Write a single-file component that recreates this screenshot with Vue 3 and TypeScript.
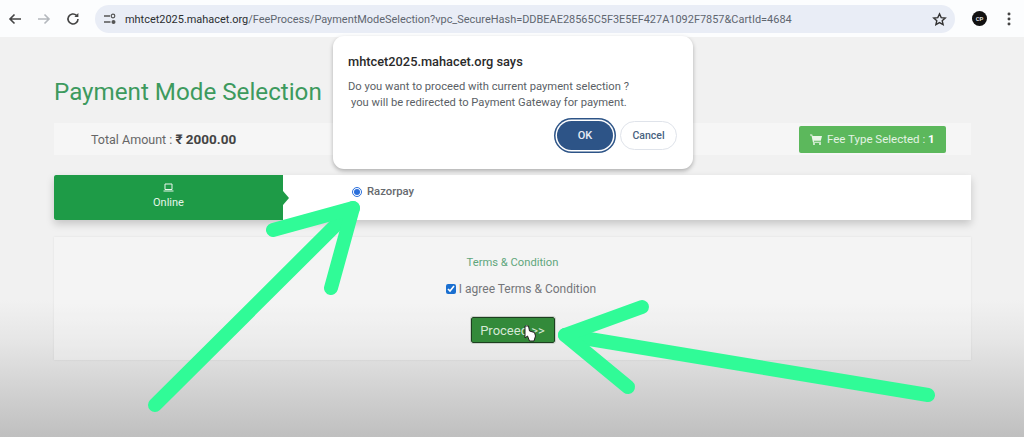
<script setup lang="ts">
const url = 'mhtcet2025.mahacet.org'
const urlPath = '/FeeProcess/PaymentModeSelection?vpc_SecureHash=DDBEAE28565C5F3E5EF427A1092F7857&CartId=4684'
</script>

<template>
  <div class="screen">
    <header class="browser-bar">
      <div class="nav-icons">
        <svg width="16" height="16" viewBox="0 0 16 16" class="nav-back">
          <path d="M14 8H3M7.5 3.5 3 8l4.5 4.5" fill="none" stroke="#444" stroke-width="1.6" />
        </svg>
        <svg width="16" height="16" viewBox="0 0 16 16" class="nav-forward">
          <path d="M2 8h11M8.5 3.5 13 8l-4.5 4.5" fill="none" stroke="#b4b8bd" stroke-width="1.6" />
        </svg>
        <svg width="16" height="16" viewBox="0 0 16 16" class="nav-reload">
          <path d="M13 8a5 5 0 1 1-1.5-3.6" fill="none" stroke="#444" stroke-width="1.6" />
          <path d="M13.4 2v4h-4z" fill="#444" />
        </svg>
      </div>
      <div class="url-pill">
        <svg width="14" height="12" viewBox="0 0 14 12" class="site-icon">
          <path d="M1 3h6M1 9h6.500" fill="none" stroke="#555" stroke-width="1.300" />
          <circle cx="10" cy="3" r="1.800" fill="none" stroke="#555" stroke-width="1.200" />
          <circle cx="10.500" cy="9" r="2" fill="#555" />
        </svg>
        <span class="url-text"><span class="url-host">{{ url }}</span>{{ urlPath }}</span>
        <svg width="15" height="15" viewBox="0 0 24 24" class="star">
          <path d="m12 3 2.700 6 6.500.6-4.900 4.300 1.500 6.400L12 17l-5.800 3.300 1.500-6.400-4.900-4.300 6.500-.6z" fill="none" stroke="#333" stroke-width="2.200" />
        </svg>
      </div>
      <div class="avatar">CP</div>
      <svg width="4" height="14" viewBox="0 0 4 14" class="kebab">
        <circle cx="2" cy="2" r="1.500" fill="#444" />
        <circle cx="2" cy="7" r="1.500" fill="#444" />
        <circle cx="2" cy="12" r="1.500" fill="#444" />
      </svg>
    </header>

    <main class="page">
      <h1 class="title">Payment Mode Selection</h1>

      <section class="amount-row">
        <div class="amount">Total Amount : <b>₹ 2000.00</b></div>
        <div class="fee-badge">
          <svg width="12" height="11" viewBox="0 0 12 11">
            <path d="M0 .5h2.200l.4 1.500H12l-1.200 4.700H3.800L4 7.800h7v1H3L1.500 1.500H0z" fill="#eaf6e8" />
            <circle cx="4" cy="10" r="1" fill="#eaf6e8" />
            <circle cx="10" cy="10" r="1" fill="#eaf6e8" />
          </svg>
          <span>Fee Type Selected : <b>1</b></span>
        </div>
      </section>

      <section class="mode-tabs">
        <div class="tab-active">
          <svg width="11" height="9" viewBox="0 0 11 9">
            <path d="M2 1h7v5.500H2zM.5 8h10" fill="none" stroke="#eaf6ee" stroke-width="1" />
          </svg>
          <span>Online</span>
        </div>
        <div class="tab-body">
          <label class="radio-label">
            <input type="radio" checked />
            <span>Razorpay</span>
          </label>
        </div>
      </section>

      <section class="terms">
        <div class="terms-title">Terms &amp; Condition</div>
        <label class="agree">
          <input type="checkbox" checked />
          <span>I agree Terms &amp; Condition</span>
        </label>
        <button class="proceed" type="button">Proceed &gt;&gt;</button>
      </section>
    </main>

    <div class="dialog">
      <div class="dialog-title">{{ url }} says</div>
      <p class="dialog-text">Do you want to proceed with current payment selection ?</p>
      <p class="dialog-text second">you will be redirected to Payment Gateway for payment.</p>
      <div class="dialog-actions">
        <button class="btn-ok" type="button">OK</button>
        <button class="btn-cancel" type="button">Cancel</button>
      </div>
    </div>

    <!-- annotation arrows + mouse pointer drawn over the screenshot -->
    <svg class="overlay" width="1024" height="437" viewBox="0 0 1024 437">
      <g fill="none" stroke="#30fb97" stroke-width="14" stroke-linecap="round" stroke-linejoin="round">
        <path d="M155 405 353 208" />
        <path d="M273 230 353 208 331 288" />
        <path d="M928 395 565 335" />
        <path d="M642 307 565 335 628 387" />
      </g>
      <path d="M525 326v12l2.500-2 2 5h4.500l1.500-5-1-3.500-5-1.500-1-5z" fill="#fff" stroke="#222" stroke-width="1" />
    </svg>
  </div>
</template>

<style scoped>
.screen {
  position: relative;
  width: 1024px;
  height: 437px;
  overflow: hidden;
  background: linear-gradient(to bottom, #f1f1f1 0, #f1f1f1 300px, #e6e6e6 340px, #d6d6d6 380px, #bfbfbf 437px);
  font-family: Roboto, "Liberation Sans", sans-serif;
}

.browser-bar {
  display: flex;
  align-items: center;
  height: 37px;
  padding: 0 13px 0 7px;
  background: #fcfdfe;
  box-sizing: border-box;
}

.nav-icons {
  display: flex;
  align-items: center;
  gap: 13px;
  margin-right: 14px;
}

.url-pill {
  display: flex;
  align-items: center;
  width: 862px;
  height: 28px;
  padding: 0 8px 0 8px;
  margin-top: 1px;
  background: #e9edf6;
  border-radius: 14px;
  box-sizing: border-box;
}

.site-icon {
  margin-right: 8px;
}

.url-text {
  flex: 1;
  font-size: 10.95px;
  color: #5f6670;
  white-space: nowrap;
}

.url-host {
  color: #2b2d30;
}

.avatar {
  width: 15px;
  height: 15px;
  margin-left: 17px;
  border-radius: 50%;
  background: #111;
  color: #ddd;
  font-size: 6px;
  font-weight: 700;
  line-height: 15px;
  text-align: center;
}

.kebab {
  margin-left: 20px;
}

.page {
  display: flex;
  flex-direction: column;
  width: 917px;
  margin-left: 54px;
}

.title {
  margin: 39px 0 14px;
  font-size: 24.2px;
  font-weight: 400;
  line-height: 33px;
  color: #3d9a5e;
}

.amount-row {
  display: flex;
  align-items: center;
  justify-content: space-between;
  height: 32px;
  padding: 0 25px 0 37px;
  margin-bottom: 20px;
  background: #f6f6f6;
}

.amount {
  font-size: 12.5px;
  color: #666;
}

.amount b {
  font-size: 13.5px;
  color: #444;
}

.fee-badge {
  display: flex;
  align-items: center;
  gap: 5px;
  width: 147px;
  height: 27px;
  padding-left: 11px;
  border-radius: 2px;
  background: #5cb85c;
  color: #e4f3e4;
  font-size: 11.5px;
  box-sizing: border-box;
}

.fee-badge b {
  color: #fff;
}

.mode-tabs {
  display: flex;
  height: 45px;
  margin-bottom: 17px;
  background: #fff;
  box-shadow: 0 4px 8px rgba(0, 0, 0, 0.18);
}

.tab-active {
  position: relative;
  display: flex;
  flex-direction: column;
  align-items: center;
  justify-content: center;
  gap: 4px;
  width: 229px;
  padding-bottom: 4px;
  border-radius: 2px 0 0 2px;
  background: #1e9b47;
  color: #e5f5ea;
  font-size: 11px;
  box-sizing: border-box;
}

.tab-active::after {
  content: "";
  position: absolute;
  top: 50%;
  right: -6px;
  width: 0;
  height: 0;
  margin-top: -7px;
  border-top: 7px solid transparent;
  border-bottom: 7px solid transparent;
  border-left: 6px solid #1e9b47;
}

.tab-body {
  padding: 10px 0 0 69px;
}

.radio-label {
  display: flex;
  align-items: center;
  gap: 5px;
  font-size: 11.3px;
  font-weight: 500;
  color: #66696e;
}

.radio-label input {
  width: 10px;
  height: 10px;
  margin: 0;
  accent-color: #2a6fdb;
}

.terms {
  display: flex;
  flex-direction: column;
  align-items: center;
  height: 123px;
  padding-top: 19px;
  background: rgba(255, 255, 255, 0.25);
  box-shadow: 0 0 2px rgba(0, 0, 0, 0.08);
  box-sizing: border-box;
}

.terms-title {
  margin-bottom: 13px;
  font-size: 11.2px;
  color: #5fa67c;
}

.agree {
  display: flex;
  align-items: center;
  gap: 3px;
  margin-bottom: 21px;
  margin-left: 17px;
  font-size: 12px;
  color: #74767a;
}

.agree input {
  width: 10px;
  height: 10px;
  margin: 0;
  accent-color: #1a6fd0;
}

.proceed {
  width: 84px;
  height: 26px;
  padding: 0;
  border: 1.500px solid #1d3f20;
  border-radius: 2px;
  outline: 1px solid #c9cfc9;
  background: #338a3a;
  color: #d6e8d6;
  font-family: inherit;
  font-size: 13px;
}

.dialog {
  position: absolute;
  top: 36px;
  left: 333px;
  width: 360px;
  height: 133px;
  padding: 18px 15px 0;
  background: #fff;
  border-radius: 11px;
  box-shadow: 0 2px 4px rgba(0, 0, 0, 0.28);
  box-sizing: border-box;
}

.dialog-title {
  margin-bottom: 10px;
  font-size: 12.8px;
  font-weight: 500;
  color: #2a2a2a;
}

.dialog-text {
  margin: 0;
  font-size: 11.2px;
  line-height: 16px;
  color: #5b5f66;
}

.dialog-text.second {
  padding-left: 3px;
}

.dialog-actions {
  display: flex;
  justify-content: flex-end;
  align-items: center;
  gap: 7px;
  margin-top: 10px;
  padding-right: 1px;
}

.btn-ok,
.btn-cancel {
  height: 29px;
  padding: 0;
  border-radius: 15px;
  font-family: inherit;
  font-weight: 500;
}

.btn-ok {
  width: 56px;
  border: none;
  background: #2d5487;
  color: #e8edf5;
  font-size: 11px;
  box-shadow: 0 0 0 1.500px #fff, 0 0 0 3px #2d5487;
}

.btn-cancel {
  width: 57px;
  border: 1px solid #dfe3ea;
  background: #fff;
  color: #48627f;
  font-size: 10.5px;
}

.overlay {
  position: absolute;
  top: 0;
  left: 0;
  pointer-events: none;
}
</style>

<style>
html,
body {
  margin: 0;
}
</style>
